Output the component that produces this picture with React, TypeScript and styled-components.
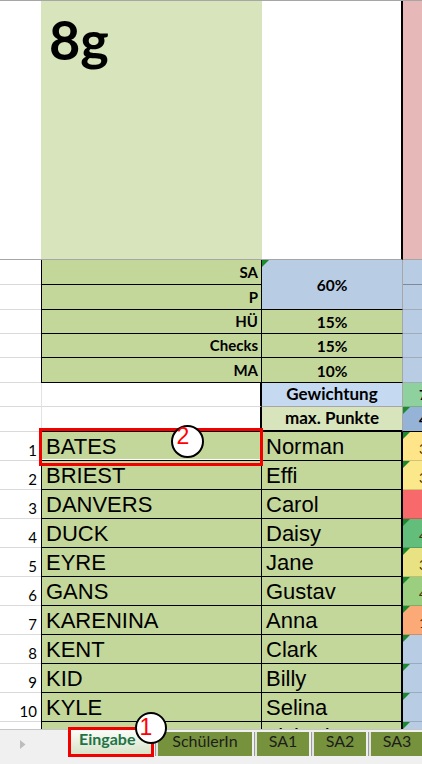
import React from 'react';
import styled, { createGlobalStyle } from 'styled-components';

const CAL = `Lato, "Liberation Sans", sans-serif`;
const ARIAL = `"Liberation Sans", Arial, sans-serif`;

const GlobalStyle = createGlobalStyle`
  html, body { margin: 0; padding: 0; background: #ffffff; }
  body { font-family: ${CAL}; }
  *, *::before, *::after { box-sizing: border-box; }
`;

const Screen = styled.div`
  position: relative;
  width: 422px;
  height: 764px;
  overflow: hidden;
  display: flex;
  flex-direction: column;
  background: #ffffff;
`;

const Sheet = styled.div`
  flex: none;
  height: 729px;
  overflow: hidden;
  border-top: 1px solid #a6a6a6;
  display: grid;
  grid-template-columns: 41px 221px 141px 19px;
  grid-template-rows: 259px 25px 25px 24px 24px 25px 24px 25px repeat(11, 29px);
  align-content: start;
`;

const Gutter = styled.div<{ $line?: string }>`
  border-bottom: 1px solid ${(p) => p.$line ?? '#dadada'};
  display: flex;
  align-items: flex-end;
  justify-content: flex-end;
  padding: 0 4px 1px 0;
  font: 400 15px/18px ${CAL};
  color: #000;
`;

const TitleCell = styled.div`
  background: #d8e4bc;
  border-bottom: 1px solid #a6a6a6;
  padding: 7px 0 0 8px;
  font: 700 54px/1.2 ${CAL};
  color: #000;
`;

const FrozenBlank = styled.div`
  background: #ffffff;
  border-bottom: 1px solid #a6a6a6;
  border-right: 2px solid #000;
`;

const Strip = styled.div<{ $bg: string; $line?: string; $bold?: boolean }>`
  position: relative;
  background: ${(p) => p.$bg};
  border-bottom: 1px solid ${(p) => p.$line ?? 'rgba(0,0,0,0.16)'};
  overflow: hidden;
  white-space: nowrap;
  display: flex;
  align-items: flex-end;
  padding: 0 0 3px 16px;
  font: ${(p) => (p.$bold ? 700 : 400)} 14px/17px ${CAL};
  color: ${(p) => (p.$bold ? '#000' : '#4a3208')};
`;

const Marker = styled.span`
  position: absolute;
  left: 0;
  top: 0;
  width: 0;
  height: 0;
  border-top: 7px solid #1b8a2f;
  border-right: 7px solid transparent;
`;

const LabelCell = styled.div`
  background: #c4d79b;
  border-left: 1px solid #000;
  border-right: 1px solid #000;
  border-bottom: 1px solid #000;
  display: flex;
  align-items: flex-end;
  justify-content: flex-end;
  padding: 0 3px 3px 0;
  font: 700 15px/18px ${CAL};
  color: #000;
`;

const WeightCell = styled.div<{ $bg: string; $span?: number; $center?: boolean }>`
  position: relative;
  grid-row: span ${(p) => p.$span ?? 1};
  background: ${(p) => p.$bg};
  border-bottom: 1px solid #000;
  border-right: 1px solid #a6a6a6;
  display: flex;
  align-items: ${(p) => (p.$center ? 'center' : 'flex-end')};
  justify-content: center;
  padding-bottom: ${(p) => (p.$center ? '0' : '2px')};
  font: 700 15.5px/18px ${CAL};
  color: #000;
`;

const BlankCell = styled.div<{ $bottom?: string }>`
  background: #ffffff;
  border-left: 1px solid #e2e2e2;
  border-bottom: 1px solid ${(p) => p.$bottom ?? '#dadada'};
  border-right: 2px solid #000;
`;

const HeadCell = styled.div<{ $bg: string; $thick?: boolean }>`
  background: ${(p) => p.$bg};
  border-bottom: ${(p) => (p.$thick ? '2px solid #000' : '1px solid #a6a6a6')};
  border-right: 1px solid #a6a6a6;
  display: flex;
  align-items: flex-end;
  justify-content: center;
  padding-bottom: 2px;
  font: 700 17px/20px ${CAL};
  color: #000;
  white-space: nowrap;
`;

const NameCell = styled.div<{ $col: 'last' | 'first'; $selected?: boolean }>`
  background: #c4d79b;
  border-bottom: 1px solid #000;
  border-left: ${(p) => (p.$col === 'last' ? '1px solid #000' : 'none')};
  border-right: ${(p) => (p.$col === 'last' ? '1px solid #000' : '2px solid #000')};
  box-shadow: ${(p) => (p.$selected ? 'inset 0 -1px 0 #ffffff' : 'none')};
  display: flex;
  align-items: flex-end;
  padding: 0 0 1px 4px;
  white-space: nowrap;
  overflow: hidden;
  font: 400 22px/24px ${ARIAL};
  color: #000;
`;

const TabBar = styled.div`
  flex: 1;
  display: flex;
  align-items: flex-start;
  background: #f0f0f0;
  border-top: 1px solid #c6c6c6;
`;

const ScrollNav = styled.div`
  flex: none;
  width: 70px;
  padding: 10px 0 0 20px;
  display: flex;
`;

const ActiveTab = styled.div`
  flex: none;
  width: 83px;
  height: 27px;
  margin-top: -1px;
  background: linear-gradient(#fdfefb, #d3e0c4);
  padding: 1px 0 0 9px;
  font: 700 16px/18px ${CAL};
  color: #217346;
  white-space: nowrap;
`;

const SheetTab = styled.div<{ $w: number }>`
  flex: none;
  width: ${(p) => p.$w}px;
  height: 24px;
  margin: 2px 0 0 5px;
  background: #76923c;
  box-shadow: -2px 0 0 #e2e2e2, -3px 0 0 #9c9c9c;
  display: flex;
  justify-content: center;
  padding-top: 0;
  font: 400 16px/18px ${CAL};
  color: #1d1d1d;
  white-space: nowrap;
  overflow: hidden;
`;

const Highlight = styled.div<{ $x: number; $y: number; $w: number; $h: number }>`
  position: absolute;
  left: ${(p) => p.$x}px;
  top: ${(p) => p.$y}px;
  width: ${(p) => p.$w}px;
  height: ${(p) => p.$h}px;
  border: 3px solid #f20000;
  pointer-events: none;
`;

const Callout = styled.div<{ $x: number; $y: number; $size: number; $dx: number; $dy: number }>`
  position: absolute;
  left: ${(p) => p.$x}px;
  top: ${(p) => p.$y}px;
  width: ${(p) => p.$size}px;
  height: ${(p) => p.$size}px;
  border-radius: 50%;
  border: 2px solid #000;
  background: #ffffff;
  display: flex;
  align-items: center;
  justify-content: center;
  padding-right: ${(p) => p.$dx}px;
  padding-bottom: ${(p) => p.$dy}px;
  font: 400 23px/1 ${ARIAL};
  color: #ff0000;
`;

type Student = {
  last: string;
  first: string;
  color: string;
  score: string;
  marker: boolean;
};

const students: Student[] = [
  { last: 'BATES', first: 'Norman', color: '#ffe58a', score: '3', marker: true },
  { last: 'BRIEST', first: 'Effi', color: '#fbe88a', score: '3', marker: true },
  { last: 'DANVERS', first: 'Carol', color: '#f8696b', score: '', marker: false },
  { last: 'DUCK', first: 'Daisy', color: '#63be7b', score: '4', marker: true },
  { last: 'EYRE', first: 'Jane', color: '#e9e283', score: '3', marker: true },
  { last: 'GANS', first: 'Gustav', color: '#9bce7e', score: '4', marker: true },
  { last: 'KARENINA', first: 'Anna', color: '#fbaa77', score: '1', marker: true },
  { last: 'KENT', first: 'Clark', color: '#b8cce4', score: '', marker: true },
  { last: 'KID', first: 'Billy', color: '#b8cce4', score: '', marker: true },
  { last: 'KYLE', first: 'Selina', color: '#b8cce4', score: '', marker: true },
  { last: 'RIPLEY', first: 'Lisbeth', color: '#b8cce4', score: '', marker: true },
];

const weights = [
  { label: 'HÜ', value: '15%' },
  { label: 'Checks', value: '15%' },
  { label: 'MA', value: '10%' },
];

const Arrow = () => (
  <svg width="6" height="9" viewBox="0 0 6 9">
    <polygon points="0,0 5.5,4.5 0,9" fill="#bdbdbd" />
  </svg>
);

export default function App() {
  return (
    <>
      <GlobalStyle />
      <Screen>
        <Sheet>
          <Gutter $line="#a6a6a6" />
          <TitleCell>8g</TitleCell>
          <FrozenBlank />
          <Strip $bg="#e6b8b7" $line="#a6a6a6" />

          <Gutter />
          <LabelCell>SA</LabelCell>
          <WeightCell $bg="#b8cce4" $span={2} $center>
            <Marker />
            60%
          </WeightCell>
          <Strip $bg="#b8cce4" $line="#7d8a99" />
          <Gutter />
          <LabelCell>P</LabelCell>
          <Strip $bg="#b8cce4" $line="#a0acba" />

          {weights.map((w) => (
            <React.Fragment key={w.label}>
              <Gutter />
              <LabelCell>{w.label}</LabelCell>
              <WeightCell $bg="#c4d79b">{w.value}</WeightCell>
              <Strip $bg="#b8cce4" $line="#a0acba" />
            </React.Fragment>
          ))}

          <Gutter />
          <BlankCell />
          <HeadCell $bg="#c5d9f1">Gewichtung</HeadCell>
          <Strip $bg="#8fd19e" $bold>7</Strip>

          <Gutter />
          <BlankCell $bottom="#000" />
          <HeadCell $bg="#d8e4bc" $thick>max. Punkte</HeadCell>
          <Strip $bg="#95b3d7" $line="#000" $bold>
            <Marker />4
          </Strip>

          {students.map((s, i) => (
            <React.Fragment key={s.last}>
              <Gutter>{i + 1}</Gutter>
              <NameCell $col="last" $selected={i === 0}>{s.last}</NameCell>
              <NameCell $col="first">{s.first}</NameCell>
              <Strip $bg={s.color}>
                {s.marker && <Marker />}
                {s.score}
              </Strip>
            </React.Fragment>
          ))}
        </Sheet>

        <TabBar>
          <ScrollNav>
            <Arrow />
          </ScrollNav>
          <ActiveTab>Eingabe</ActiveTab>
          <SheetTab $w={94}>SchülerIn</SheetTab>
          <SheetTab $w={52}>SA1</SheetTab>
          <SheetTab $w={52}>SA2</SheetTab>
          <SheetTab $w={52}>SA3</SheetTab>
          <SheetTab $w={52}>SA4</SheetTab>
        </TabBar>

        <Highlight $x={39} $y={428} $w={224} $h={38} />
        <Callout $x={171} $y={425} $size={33} $dx={9} $dy={10}>2</Callout>
        <Highlight $x={68} $y={727} $w={86} $h={30} />
        <Callout $x={135} $y={712} $size={32} $dx={10} $dy={2}>1</Callout>
      </Screen>
    </>
  );
}
